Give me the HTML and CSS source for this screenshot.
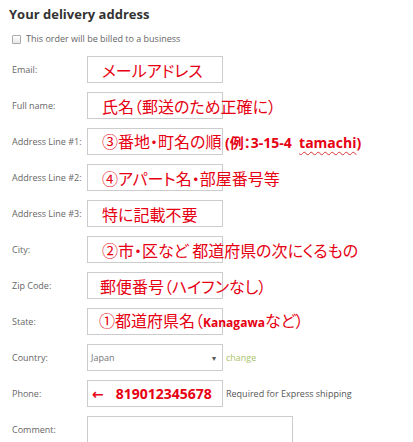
FILE: index.html
```html
<!DOCTYPE html>
<html>
<head>
<meta charset="utf-8">
<link rel="stylesheet" href="styles.css">
</head>
<body>
<div class="page">
  <h2 class="title">Your delivery address</h2>
  <label class="biz"><span class="check"></span>This order will be billed to a business</label>
  <div class="form">
    <div class="row"><span class="lbl">Email:</span><div class="box"><span class="note">メールアドレス</span></div></div>
    <div class="row"><span class="lbl">Full name:</span><div class="box"><span class="note">氏名（郵送のため正確に）</span></div></div>
    <div class="row"><span class="lbl">Address Line #1:</span><div class="box"><span class="note">③番地・町名の順 <span class="lat">(例：3-15-4&nbsp; <span class="squig">tamachi</span>)</span></span></div></div>
    <div class="row"><span class="lbl">Address Line #2:</span><div class="box"><span class="note">④アパート名・部屋番号等</span></div></div>
    <div class="row"><span class="lbl">Address Line #3:</span><div class="box"><span class="note">特に記載不要</span></div></div>
    <div class="row"><span class="lbl">City:</span><div class="box"><span class="note">②市・区など 都道府県の次にくるもの</span></div></div>
    <div class="row"><span class="lbl">Zip Code:</span><div class="box"><span class="note zip">郵便番号（ハイフンなし）</span></div></div>
    <div class="row"><span class="lbl">State:</span><div class="box"><span class="note st">①都道府県名（<span class="kana">Kanagawa</span>など）</span></div></div>
    <div class="row"><span class="lbl">Country:</span><div class="box select"><span class="val">Japan</span><span class="arrow">▾</span></div><span class="change">change</span></div>
    <div class="row"><span class="lbl">Phone:</span><div class="box"><span class="note phone"><span class="larr">←</span>819012345678</span></div><span class="hint">Required for Express shipping</span></div>
    <div class="row"><span class="lbl">Comment:</span><div class="box comment"></div></div>
  </div>
</div>
</body>
</html>
```
FILE: styles.css
```css
html, body {
  margin: 0;
  padding: 0;
  background: #fff;
}
body {
  width: 413px;
  height: 442px;
  overflow: hidden;
  font-family: "Open Sans", "Noto Sans", sans-serif;
  color: #555;
}
.page {
  padding: 4px 0 0 9px;
}
.title {
  margin: 0;
  font-size: 13px;
  line-height: 20px;
  font-weight: 700;
  color: #333;
}
.biz {
  display: flex;
  align-items: center;
  margin: 9px 0 0 3px;
  font-size: 9px;
  line-height: 12px;
  color: #666;
}
.check {
  width: 7px;
  height: 7px;
  border: 1px solid #aaa;
  border-radius: 1px;
  background: linear-gradient(#fff, #e8e8e8);
  margin-right: 5px;
}
.form {
  display: flex;
  flex-direction: column;
  gap: 9px;
  margin-top: 11px;
}
.row {
  display: flex;
  align-items: center;
  height: 27px;
}
.lbl {
  width: 78px;
  flex: none;
  padding-left: 3px;
  box-sizing: border-box;
  font-size: 9px;
  color: #666;
}
.box {
  flex: none;
  width: 136px;
  height: 27px;
  box-sizing: border-box;
  border: 1px solid #ccc;
  background: #fff;
  display: flex;
  align-items: center;
  padding-left: 14px;
  white-space: nowrap;
  overflow: visible;
  position: relative;
}
.note {
  font-family: "Noto Sans CJK JP", "Noto Sans", sans-serif;
  font-size: 16px;
  line-height: 18px;
  color: #e60012;
  font-feature-settings: "palt";
  position: relative;
  z-index: 1;
}
.lat {
  font-family: "Open Sans", "Noto Sans CJK JP", sans-serif;
  font-weight: 700;
  font-size: 14px;
}
.squig {
  text-decoration: underline wavy #d33;
  text-decoration-thickness: 1px;
  text-underline-offset: 3px;
}
.zip { margin-left: -2px; }
.st { margin-left: -3px; }
.kana {
  font-family: "Open Sans", sans-serif;
  font-weight: 700;
  font-size: 12px;
}
.phone {
  font-family: "Open Sans", sans-serif;
  font-weight: 700;
  font-size: 14px;
  margin-left: -10px;
}
.larr {
  font-family: "DejaVu Sans", sans-serif;
  font-weight: 700;
  margin-right: 12px;
}
.select {
  padding: 0 6px 0 3px;
  justify-content: space-between;
}
.val {
  font-size: 9px;
  color: #777;
}
.arrow {
  font-size: 8px;
  color: #555;
}
.change {
  margin-left: 3px;
  font-size: 9px;
  color: #a9c46a;
}
.hint {
  margin-left: 3px;
  font-size: 9px;
  color: #555;
}
.comment {
  width: 206px;
  height: 40px;
  align-self: flex-start;
}
```
